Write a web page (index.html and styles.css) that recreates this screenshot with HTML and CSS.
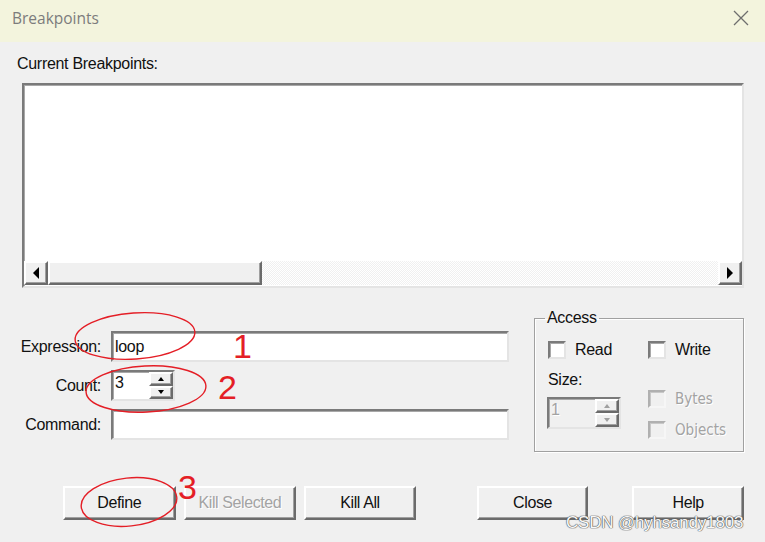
FILE: index.html
```html
<!DOCTYPE html>
<html>
<head>
<meta charset="utf-8">
<link rel="stylesheet" href="styles.css">
</head>
<body>
<div class="window">
  <div class="titlebar">
    <span class="title">Breakpoints</span>
    <svg class="close" width="16" height="16" viewBox="0 0 16 16"><path d="M1 1 L15 15 M15 1 L1 15" stroke="#6e6e6e" stroke-width="1.3" fill="none"/></svg>
  </div>
  <div class="body">
    <div class="label current">Current Breakpoints:</div>
    <div class="listbox sunken">
      <div class="list-area"></div>
      <div class="hscroll">
        <div class="sbtn raised"><svg width="8" height="12" viewBox="0 0 8 12"><path d="M7 0 L7 12 L1 6 Z" fill="#000"/></svg></div>
        <div class="thumb raised"></div>
        <div class="track"></div>
        <div class="sbtn raised"><svg width="8" height="12" viewBox="0 0 8 12"><path d="M1 0 L1 12 L7 6 Z" fill="#000"/></svg></div>
      </div>
    </div>
    <div class="lower">
      <div class="fields">
        <div class="label flabel">Expression:</div>
        <div class="field sunken wide"><span class="val">loop</span></div>
        <div class="label flabel">Count:</div>
        <div class="spin sunken count">
          <span class="val spinval">3</span>
          <div class="spinbtns">
            <div class="spb raised"><svg width="6" height="4" viewBox="0 0 6 4"><path d="M0 4 L6 4 L3 0 Z" fill="#000"/></svg></div>
            <div class="spb raised"><svg width="6" height="4" viewBox="0 0 6 4"><path d="M0 0 L6 0 L3 4 Z" fill="#000"/></svg></div>
          </div>
        </div>
        <div class="label flabel">Command:</div>
        <div class="field sunken wide"></div>
      </div>
      <fieldset class="access">
        <legend class="label">Access</legend>
        <div class="access-cols">
          <div class="acol first">
            <div class="check"><span class="box"></span><span class="label">Read</span></div>
            <div class="label size-label">Size:</div>
            <div class="spin sunken disabled size">
              <span class="val spinval dis">1</span>
              <div class="spinbtns">
                <div class="spb raised"><svg width="6" height="4" viewBox="0 0 6 4"><path d="M0 4 L6 4 L3 0 Z" fill="#a0a0a0"/></svg></div>
                <div class="spb raised"><svg width="6" height="4" viewBox="0 0 6 4"><path d="M0 0 L6 0 L3 4 Z" fill="#a0a0a0"/></svg></div>
              </div>
            </div>
          </div>
          <div class="acol second">
            <div class="check"><span class="box"></span><span class="label">Write</span></div>
            <div class="check bytes"><span class="box dbox"></span><span class="label dis cond">Bytes</span></div>
            <div class="check objects"><span class="box dbox"></span><span class="label dis cond">Objects</span></div>
          </div>
        </div>
      </fieldset>
    </div>
    <div class="buttons">
      <div class="btn raised define">Define</div>
      <div class="btn raised kill-sel"><span class="dis">Kill Selected</span></div>
      <div class="btn raised kill-all">Kill All</div>
      <div class="btn raised close-btn">Close</div>
      <div class="btn raised help">Help</div>
    </div>
  </div>
  <svg class="annot" width="765" height="542" viewBox="0 0 765 542">
    <ellipse cx="135" cy="336" rx="60" ry="23" transform="rotate(-4 135 336)" fill="none" stroke="#e41e26" stroke-width="1.4"/>
    <ellipse cx="146" cy="389" rx="60" ry="23" transform="rotate(-3 146 389)" fill="none" stroke="#e41e26" stroke-width="1.4"/>
    <ellipse cx="129" cy="502" rx="48" ry="24" transform="rotate(-6 129 502)" fill="none" stroke="#e41e26" stroke-width="1.4"/>
    <text x="233" y="358" class="num">1</text>
    <text x="218" y="399" class="num">2</text>
    <text x="178" y="499" class="num">3</text>
  </svg>
  <div class="watermark">CSDN @hyhsandy1803</div>
</div>
</body>
</html>
```

FILE: styles.css
```css
* { box-sizing: border-box; }
html, body { margin: 0; padding: 0; }
body { background: #f0f0f0; }
.window {
  position: relative;
  width: 765px;
  height: 542px;
  overflow: hidden;
  background: #f0f0f0;
  font-family: "Liberation Sans", Arial, sans-serif;
}
.titlebar {
  height: 42px;
  background: #f3f4dd;
  display: flex;
  justify-content: space-between;
  align-items: flex-start;
  padding: 8px 16px 0 12px;
}
.title {
  font-family: "Open Sans", "Noto Sans", sans-serif;
  font-size: 15.5px;
  line-height: 20px;
  color: #7c7c7c;
}
.close { margin-top: 2px; }
.body { padding: 0 21px 0 17px; }
.label {
  font-size: 16px;
  line-height: 18px;
  color: #111;
  letter-spacing: -0.3px;
}
.current { margin-top: 13px; }
.sunken {
  border-style: solid;
  border-width: 2px;
  border-color: #7a7a7a #e4e4e4 #e4e4e4 #7a7a7a;
  box-shadow: inset 1px 1px 0 #a8a8a8;
  background: #fff;
}
.raised {
  border-style: solid;
  border-width: 2px;
  border-color: #ffffff #6b6b6b #6b6b6b #ffffff;
  box-shadow: inset -1px -1px 0 #a0a0a0;
  background: #f0f0f0;
}
.listbox {
  margin: 10px 0 0 5px;
  width: 722px;
  height: 205px;
  display: flex;
  flex-direction: column;
}
.list-area { flex: 1; }
.hscroll {
  height: 24px;
  display: flex;
  margin-bottom: 1px;
}
.sbtn {
  width: 24px;
  display: flex;
  align-items: center;
  justify-content: center;
}
.thumb { width: 214px; }
.track {
  flex: 1;
  background: repeating-conic-gradient(#ffffff 0 25%, #f0f0f0 0 50%) 0 0 / 2px 2px;
}
.lower {
  display: flex;
  margin-top: 21px;
}
.fields {
  padding-top: 22px;
  display: grid;
  grid-template-columns: 84px auto;
  column-gap: 10px;
  row-gap: 8px;
  align-items: center;
  align-content: start;
}
.flabel { text-align: right; }
.field { height: 31px; display: flex; align-items: center; }
.wide { width: 398px; }
.val {
  font-size: 16px;
  color: #111;
  padding-left: 2px;
  letter-spacing: -0.3px;
}
.spin {
  height: 31px;
  display: flex;
  align-items: center;
  justify-content: space-between;
}
.count { width: 64px; }
.spinval { align-self: flex-start; padding-top: 2px; }
.spinbtns {
  width: 24px;
  height: 100%;
  display: flex;
  flex-direction: column;
}
.spb {
  flex: 1;
  display: flex;
  align-items: center;
  justify-content: center;
}
.access {
  margin: 0 0 0 25px;
  padding: 0;
  width: 210px;
  height: 143px;
  border: 1px solid #a0a0a0;
  box-shadow: 1px 1px 0 #ffffff, inset 1px 1px 0 #ffffff;
  min-width: 0;
}
.access legend {
  margin-left: 10px;
  padding: 0 2px;
}
.access-cols {
  display: flex;
  margin-top: 14px;
}
.acol { display: flex; flex-direction: column; }
.first { width: 113px; padding-left: 13px; }
.check {
  display: flex;
  align-items: center;
  height: 18px;
  gap: 9px;
}
.box {
  width: 18px;
  height: 18px;
  background: #fff;
  border-style: solid;
  border-width: 2px;
  border-color: #7a7a7a #e4e4e4 #e4e4e4 #7a7a7a;
  box-shadow: inset 1px 1px 0 #a8a8a8;
}
.dbox {
  background: #f0f0f0;
  border-color: #b0b0b0 #f6f6f6 #f6f6f6 #b0b0b0;
  box-shadow: inset 1px 1px 0 #c8c8c8;
}
.size-label { margin-top: 12px; }
.size {
  margin-top: 8px;
  margin-left: -1px;
  width: 74px;
  height: 32px;
  background: #f0f0f0;
}
.dis { color: #a3a3a3; text-shadow: 1px 1px 0 #ffffff; }
.cond { font-family: "DejaVu Sans Condensed", "DejaVu Sans", sans-serif; font-size: 15px; letter-spacing: 0; }
.bytes { margin-top: 31px; }
.objects { margin-top: 13px; }
.buttons {
  display: flex;
  margin-top: 34px;
  padding-left: 46px;
  gap: 8px;
}
.btn {
  width: 113px;
  height: 34px;
  display: flex;
  align-items: center;
  justify-content: center;
  font-size: 16px;
  letter-spacing: -0.4px;
  color: #111;
}
.kill-all { width: 112px; }
.close-btn { width: 112px; margin-left: 53px; }
.help { width: 112px; margin-left: 36px; }
.annot {
  position: absolute;
  left: 0;
  top: 0;
  pointer-events: none;
}
.num {
  font-family: "Liberation Sans", Arial, sans-serif;
  font-size: 34px;
  fill: #e41e26;
}
.watermark {
  position: absolute;
  left: 566px;
  top: 513px;
  font-family: "Liberation Sans", Arial, sans-serif;
  font-size: 17px;
  color: #f8f8f8;
  text-shadow: 0 0 1px #555, 0 0 1px #555, 0 0 1px #555;
  letter-spacing: -0.2px;
}
```
